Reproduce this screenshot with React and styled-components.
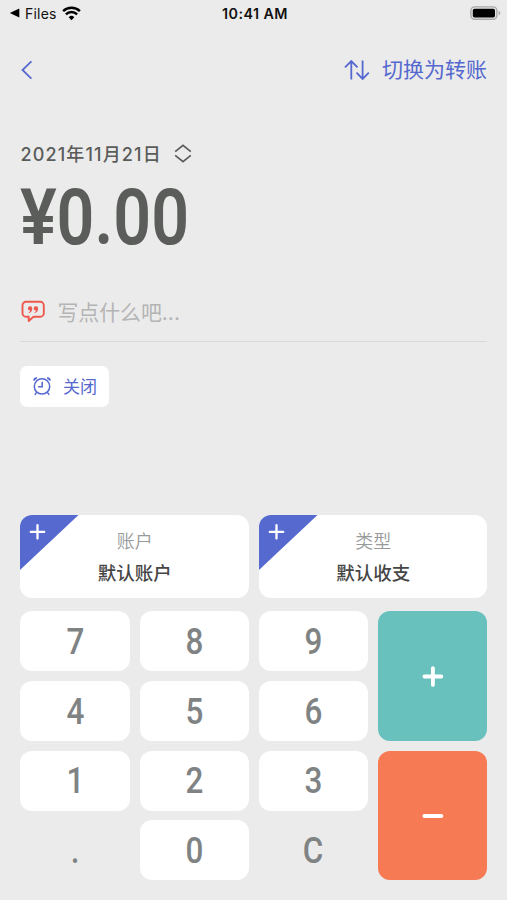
import React from "react";
import styled, { createGlobalStyle } from "styled-components";

const GlobalStyle = createGlobalStyle`
  * {
    box-sizing: border-box;
  }

  body {
    margin: 0;
    background-color: #ebebeb;
    font-family: Inter, "Noto Sans CJK SC", sans-serif;
  }

  button {
    margin: 0;
    padding: 0;
    border: none;
    background: none;
    font-family: inherit;
    cursor: pointer;
  }
`;

const Screen = styled.main`
  display: flex;
  flex-direction: column;
  width: 507px;
  height: 900px;
  overflow: hidden;
  background-color: #ebebeb;
`;

const StatusBar = styled.div`
  display: grid;
  grid-template-columns: 1fr auto 1fr;
  align-items: center;
  height: 28px;
  padding: 0 6px 2px 9px;
  color: #111;
  font-size: 14px;
`;

const StatusLeft = styled.div`
  display: flex;
  align-items: center;
  gap: 5px;
  letter-spacing: 0.2px;
`;

const StatusTime = styled.div`
  font-weight: 600;
  font-size: 14.3px;
  letter-spacing: 0.45px;
`;

const StatusRight = styled.div`
  display: flex;
  justify-content: flex-end;
`;

const NavBar = styled.nav`
  display: flex;
  align-items: center;
  justify-content: space-between;
  height: 84px;
  padding: 0 20px;
  color: #5468cf;
`;

const NavButton = styled.button`
  display: flex;
  align-items: center;
  gap: 12px;
  color: inherit;
  font-size: 21px;
  line-height: 30px;
`;

const Entry = styled.section`
  display: flex;
  flex-direction: column;
  align-items: flex-start;
  height: 403px;
  padding: 26px 19.6px 0 20.4px;
`;

const DateButton = styled.button`
  display: flex;
  align-items: center;
  gap: 12px;
  height: 30px;
  color: #5a5c5a;
  font-size: 18px;
  font-weight: 500;
  letter-spacing: 1.15px;
`;

const Amount = styled.div`
  display: flex;
  height: 94px;
  margin-top: 3px;
  color: #5a5d5a;
  font-family: Roboto, sans-serif;
  font-size: 78px;
  font-weight: 600;
  line-height: 94px;
  transform: scaleX(0.85);
  transform-origin: left;
`;

// the yen sign is drawn wider than the digits beside it
const Currency = styled.span`
  width: 43px;
  transform: scaleX(1.04);
  transform-origin: left;
`;

const Note = styled.div`
  display: flex;
  align-items: center;
  gap: 11px;
  width: 100%;
  height: 60px;
  margin-top: 17px;
  padding: 0 0 1px 1px;
  border-bottom: 1.5px solid #d9d9d9;
  color: #b4b4b4;
  font-size: 20.9px;
`;

const AlarmButton = styled.button`
  display: flex;
  align-items: center;
  gap: 10.5px;
  width: 89px;
  height: 41px;
  margin-top: 24px;
  padding: 0 0 2px 12px;
  border-radius: 7px;
  background-color: #fff;
  color: #5468cf;
  font-size: 17px;
`;

const Pickers = styled.section`
  display: grid;
  grid-template-columns: 1fr 1fr;
  gap: 10px;
  height: 83.4px;
  margin: 0 19.6px 13px 20.4px;
`;

const PickerCard = styled.button`
  position: relative;
  display: flex;
  flex-direction: column;
  align-items: center;
  padding-top: 13px;
  overflow: hidden;
  border-radius: 12px;
  background-color: #fff;
`;

const Corner = styled.svg`
  position: absolute;
  top: 0;
  left: 0;
`;

const PickerLabel = styled.span`
  color: #979a9a;
  font-size: 18px;
  font-weight: 350;
  line-height: 28px;
`;

const PickerValue = styled.span`
  color: #464646;
  font-size: 18.5px;
  font-weight: 500;
  line-height: 34px;
`;

const Keypad = styled.section`
  display: grid;
  grid-template-columns: repeat(4, 1fr);
  grid-template-rows: repeat(4, 60px);
  gap: 9.7px 9.8px;
  margin: 0 19.6px 0 20.4px;
`;

const Key = styled.button`
  display: flex;
  align-items: center;
  justify-content: center;
  border-radius: 12px;
  background-color: ${({ $plain }) => ($plain ? "transparent" : "#fff")};
  color: #7f8384;
  font-family: Roboto, sans-serif;
  font-size: 37px;
  font-weight: 500;
`;

const Glyph = styled.span`
  display: block;
  padding-top: 1px;
  line-height: 60px;
  transform: scaleX(0.85);
`;

const SignKey = styled(Key)`
  grid-column: 4;
  grid-row: ${({ $row }) => $row} / span 2;
  background-color: ${({ $color }) => $color};
`;

const WifiIcon = () => (
  <svg width="19" height="15" viewBox="0 0 19 15">
    <path d="M9.5 14.2 6.7 11.2a4 4 0 0 1 5.6 0z" fill="#000" />
    <path
      d="M3.9 8.4a8 8 0 0 1 11.2 0M1.1 5.1a12.2 12.2 0 0 1 16.8 0"
      fill="none"
      stroke="#000"
      strokeWidth="2.5"
    />
  </svg>
);

const BatteryIcon = () => (
  <svg width="31" height="14" viewBox="0 0 31 14">
    <rect x="0.9" y="0.9" width="26" height="12.4" rx="3.8" fill="#e4e4e4" stroke="#a9a9a9" strokeWidth="1.4" />
    <rect x="2.8" y="2.7" width="22.2" height="8.8" rx="1.8" fill="#000" />
    <path d="M28.6 4.8q1.7.5 1.7 2.3t-1.7 2.3z" fill="#a9a9a9" />
  </svg>
);

const BackIcon = () => (
  <svg width="13" height="20" viewBox="0 0 13 20" fill="none" stroke="currentColor" strokeWidth="1.8">
    <path d="M11.4 1.4 2.5 10l8.9 8.6" />
  </svg>
);

const SwapIcon = () => (
  <svg width="26" height="22" viewBox="0 0 26 22" fill="none" stroke="currentColor" strokeWidth="1.8">
    <path d="M7.3 20.6V2M1 8.3 7.3 2l6.2 6.3M18.6 1.4V20M12.5 13.7l6.1 6.3 6.2-6.3" />
  </svg>
);

const UpDownIcon = () => (
  <svg width="18" height="20" viewBox="0 0 18 20" fill="none" stroke="currentColor" strokeWidth="1.7">
    <path d="M1.2 8.7 9 2.3l7.8 6.4M1.2 12.3 9 18.6l7.8-6.3" />
  </svg>
);

const NoteIcon = () => (
  <svg width="25" height="23" viewBox="0 0 25 23">
    <path
      d="M5 1.8h14.3a3.5 3.5 0 0 1 3.5 3.5v7.9a3.5 3.5 0 0 1-3.5 3.5h-6.8L7.7 21v-4.3H5a3.5 3.5 0 0 1-3.5-3.5V5.3A3.5 3.5 0 0 1 5 1.8z"
      fill="none"
      stroke="#ee594d"
      strokeWidth="1.9"
      strokeLinejoin="round"
    />
    <g fill="#ee594d">
      <path d="M11.3 8.5c0 2.5-1.2 4.1-3.4 4.6l-.3-.8c1.1-.4 1.6-.9 1.7-1.7A2.2 2.2 0 1 1 11.3 8.5z" />
      <path d="M17.1 8.5c0 2.5-1.2 4.1-3.4 4.6l-.3-.8c1.1-.4 1.6-.9 1.7-1.7a2.2 2.2 0 1 1 2-2.1z" />
    </g>
  </svg>
);

const AlarmIcon = () => (
  <svg width="20" height="20" viewBox="0 0 20 20" fill="none" stroke="currentColor" strokeWidth="1.5">
    <circle cx="10" cy="10.4" r="7.7" />
    <path d="M10.2 5.8v4.9H6.1M4.6 16.4 2.8 18.9M15.4 16.4l1.8 2.5" />
    <path d="M2.2 4.6a2.2 2.2 0 0 1 2.7-2.4M17.8 4.6a2.2 2.2 0 0 0-2.7-2.4" strokeWidth="2" />
  </svg>
);

const AddCorner = () => (
  <Corner width="59" height="56" viewBox="0 0 59 56">
    <path d="M0 0h58.5L0 55z" fill="#5669cf" />
    <path d="M17.5 10.2v13.4M10.8 16.9h13.4" stroke="#fff" strokeWidth="2.3" strokeLinecap="round" />
  </Corner>
);

const SignIcon = ({ plus }) => (
  <svg width="22" height="22" viewBox="0 0 22 22" stroke="#fff" strokeWidth="3.8" strokeLinecap="round">
    <path d={plus ? "M2.4 11.5h17M10.9 3.1v16.8" : "M2.4 11h17"} />
  </svg>
);

const pickers = [
  { label: "账户", value: "默认账户" },
  { label: "类型", value: "默认收支" },
];

const keys = ["7", "8", "9", "4", "5", "6", "1", "2", "3", ".", "0", "C"];

const App = () => {
  return (
    <>
      <GlobalStyle />
      <Screen>
        <StatusBar>
          <StatusLeft>
            <svg width="11" height="10" viewBox="0 0 11 10">
              <path d="M.8 5 10.3.5v9z" fill="#000" />
            </svg>
            <span>Files</span>
            <WifiIcon />
          </StatusLeft>
          <StatusTime>10:41 AM</StatusTime>
          <StatusRight>
            <BatteryIcon />
          </StatusRight>
        </StatusBar>

        <NavBar>
          <NavButton aria-label="返回">
            <BackIcon />
          </NavButton>
          <NavButton>
            <SwapIcon />
            <span>切换为转账</span>
          </NavButton>
        </NavBar>

        <Entry>
          <DateButton>
            <span>2021年11月21日</span>
            <UpDownIcon />
          </DateButton>
          <Amount>
            <Currency>¥</Currency>
            <span>0.00</span>
          </Amount>
          <Note>
            <NoteIcon />
            <span>写点什么吧...</span>
          </Note>
          <AlarmButton>
            <AlarmIcon />
            <span>关闭</span>
          </AlarmButton>
        </Entry>

        <Pickers>
          {pickers.map(({ label, value }) => (
            <PickerCard key={label}>
              <AddCorner />
              <PickerLabel>{label}</PickerLabel>
              <PickerValue>{value}</PickerValue>
            </PickerCard>
          ))}
        </Pickers>

        <Keypad>
          {keys.map((key) => (
            <Key key={key} $plain={key === "." || key === "C"}>
              <Glyph>{key}</Glyph>
            </Key>
          ))}
          <SignKey $row={1} $color="#68c1bd" aria-label="收入">
            <SignIcon plus />
          </SignKey>
          <SignKey $row={3} $color="#f67b54" aria-label="支出">
            <SignIcon />
          </SignKey>
        </Keypad>
      </Screen>
    </>
  );
};

export default App;
